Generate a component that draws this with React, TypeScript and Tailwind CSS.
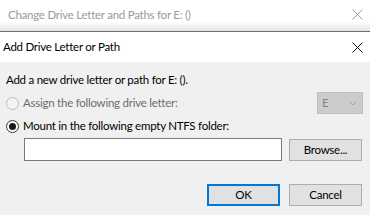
import React from 'react';

const FONT = { fontFamily: 'Lato, "Noto Sans", sans-serif' };

function CloseGlyph({ color }: { color: string }) {
  return (
    <svg width="11" height="11" viewBox="0 0 11 11" aria-hidden="true">
      <path d="M0.5 0.5 L10.5 10.5 M10.5 0.5 L0.5 10.5" stroke={color} strokeWidth="1" fill="none" />
    </svg>
  );
}

function Radio({ checked, disabled }: { checked?: boolean; disabled?: boolean }) {
  return (
    <span
      className={`flex h-[13px] w-[13px] shrink-0 items-center justify-center rounded-full border ${
        disabled ? 'border-[#bcbcbc] bg-[#f4f4f4]' : 'border-[#333333] bg-white'
      }`}
    >
      {checked ? <span className="h-[7px] w-[7px] rounded-full bg-[#1a1a1a]" /> : null}
    </span>
  );
}

function Button({ label, primary, className }: { label: string; primary?: boolean; className?: string }) {
  return (
    <button
      type="button"
      className={`flex h-[22px] items-center justify-center bg-[#e1e1e1] text-black ${
        primary ? 'border-2 border-[#0078d7]' : 'border border-[#adadad]'
      } ${className ?? ''}`}
    >
      {label}
    </button>
  );
}

export default function App() {
  return (
    <div
      className="flex h-[215px] w-[370px] flex-col overflow-hidden bg-[#f0f0f0] text-[11.5px] leading-4 tracking-[-0.25px]"
      style={FONT}
    >
      {/* parent window behind */}
      <div className="flex h-[31px] shrink-0 items-start justify-between bg-gradient-to-b from-white via-white via-70% to-[#e4e4e4] pl-2 pr-[7px] pt-[7px]">
        <span className="text-[#9a9a9a]">Change Drive Letter and Paths for E: ()</span>
        <span className="pt-[2px]">
          <CloseGlyph color="#9a9a9a" />
        </span>
      </div>
      <div className="h-px shrink-0 bg-[#6f6f6f]" />

      {/* dialog title */}
      <div className="flex h-[30px] shrink-0 items-center justify-between bg-white pl-[3px] pr-[7px]">
        <span className="text-black">Add Drive Letter or Path</span>
        <CloseGlyph color="#111111" />
      </div>

      {/* dialog body */}
      <div className="flex flex-1 flex-col pl-[6px] pr-[8px] pt-[10px]">
        <div className="text-black">Add a new drive letter or path for E: ().</div>

        <div className="mt-[4px] flex h-[22px] items-center justify-between">
          <div className="flex items-center gap-[4px]">
            <Radio disabled />
            <span className="text-[#6d6d6d]">Assign the following drive letter:</span>
          </div>
          <div className="mr-[-1px] flex h-[22px] w-[46px] items-center justify-between border border-[#bfbfbf] bg-[#cccccc] pl-[4px] pr-[5px]">
            <span className="text-[#838383]">E</span>
            <svg width="8" height="5" viewBox="0 0 8 5" aria-hidden="true">
              <path d="M0.5 0.5 L4 4 L7.5 0.5" stroke="#a4a4a4" strokeWidth="1" fill="none" />
            </svg>
          </div>
        </div>

        <div className="mt-[4px] flex h-[16px] items-center gap-[4px]">
          <Radio checked />
          <span className="text-black">Mount in the following empty NTFS folder:</span>
        </div>

        <div className="mt-[4px] flex items-center justify-between pl-[18px]">
          <div className="h-[23px] w-[258px] border border-[#7a7a7a] bg-white" />
          <Button label="Browse..." className="h-[22px] w-[73px]" />
        </div>

        <div className="mt-[23px] flex justify-end gap-[9px]">
          <Button label="OK" primary className="w-[73px]" />
          <Button label="Cancel" className="w-[73px]" />
        </div>
      </div>
    </div>
  );
}
